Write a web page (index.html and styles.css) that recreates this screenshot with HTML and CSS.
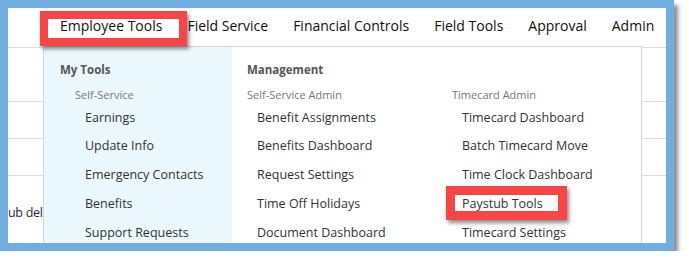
FILE: index.html
```html
<!DOCTYPE html>
<html lang="en">
<head>
    <meta charset="UTF-8">
    <meta name="viewport" content="width=device-width, initial-scale=1">
    <title>Employee Tools</title>
    <link rel="stylesheet" href="styles.css">
</head>
<body>

    <div class="frame">
        <div class="panel">

            <!-- Barra de navegação principal -->
            <nav class="topnav">
                <a href="#">Employee Tools</a>
                <a href="#">Field Service</a>
                <a href="#">Financial Controls</a>
                <a href="#">Field Tools</a>
                <a href="#">Approval</a>
                <a href="#">Admin</a>
            </nav>

            <!-- Conteúdo da página por trás do menu -->
            <div class="page">
                <div class="page-row toolbar"></div>
                <div class="page-row"></div>
                <div class="page-row"></div>
                <div class="page-row last">ub del</div>
            </div>

            <!-- Menu dropdown aberto -->
            <div class="mega">
                <div class="col mine">
                    <div class="head">My Tools</div>
                    <div class="sub indent">Self-Service</div>
                    <a href="#">Earnings</a>
                    <a href="#">Update Info</a>
                    <a href="#">Emergency Contacts</a>
                    <a href="#">Benefits</a>
                    <a href="#">Support Requests</a>
                </div>
                <div class="col">
                    <div class="head">Management</div>
                    <div class="sub">Self-Service Admin</div>
                    <a href="#">Benefit Assignments</a>
                    <a href="#">Benefits Dashboard</a>
                    <a href="#">Request Settings</a>
                    <a href="#">Time Off Holidays</a>
                    <a href="#">Document Dashboard</a>
                </div>
                <div class="col">
                    <div class="head blank">&nbsp;</div>
                    <div class="sub">Timecard Admin</div>
                    <a href="#">Timecard Dashboard</a>
                    <a href="#">Batch Timecard Move</a>
                    <a href="#">Time Clock Dashboard</a>
                    <a href="#">Paystub Tools</a>
                    <a href="#">Timecard Settings</a>
                </div>
            </div>

            <!-- Marcações vermelhas -->
            <span class="mark mark-nav"></span>
            <span class="mark mark-paystub"></span>
        </div>
    </div>

</body>
</html>
```

FILE: styles.css
```css
body {
    margin: 0;
    padding: 0;
    background-color: #ffffff;
    font-family: 'Open Sans', 'Noto Sans', sans-serif;
}

.frame {
    width: 674px;
    height: 251px;
    box-sizing: border-box;
    padding: 8px 8px 8px 8px;
    background-color: #71aee0;
    box-shadow: 4px 5px 4px rgba(0, 0, 0, 0.45);
}

.panel {
    position: relative;
    width: 100%;
    height: 100%;
    background-color: #ffffff;
    overflow: hidden;
}

/* Barra de navegação */
.topnav {
    display: flex;
    gap: 25px;
    height: 40px;
    box-sizing: border-box;
    padding: 8px 0 0 52px;
    border-bottom: 1px solid #dddddd;
}

.topnav a {
    color: #111111;
    text-decoration: none;
    font-size: 14px;
    line-height: 20px;
    white-space: nowrap;
}

/* Página por trás */
.page-row {
    height: 36px;
    border-bottom: 1px solid #dddddd;
}

.page-row.toolbar {
    height: 53px;
}

.page-row.last {
    border-bottom: none;
    padding-top: 28px;
    font-size: 12.5px;
    letter-spacing: -0.3px;
    color: #1c2a44;
    white-space: nowrap;
}

/* Menu dropdown */
.mega {
    position: absolute;
    top: 38px;
    left: 35px;
    width: 599px;
    height: 230px;
    box-sizing: border-box;
    display: grid;
    grid-template-columns: 188px 205px 1fr;
    background-color: #ffffff;
    border: 1px solid #d6d6d6;
}

.col {
    display: flex;
    flex-direction: column;
    padding: 15px 0 0 15px;
}

.col.mine {
    background-color: #eaf8fd;
    padding-left: 16px;
}

.head {
    font-size: 11.5px;
    font-weight: bold;
    line-height: 16px;
    color: #555555;
}

.sub {
    margin-top: 9px;
    font-size: 11px;
    line-height: 16px;
    color: #777777;
}

.sub.indent {
    padding-left: 15px;
}

.col a {
    display: block;
    padding-left: 10px;
    font-size: 12.5px;
    line-height: 28.75px;
    color: #333333;
    text-decoration: none;
    white-space: nowrap;
}

.col a:first-of-type {
    margin-top: 0.5px;
}

.col.mine a {
    padding-left: 25px;
}

/* Marcações vermelhas */
.mark {
    position: absolute;
    box-sizing: border-box;
    border: 8px solid #f94545;
    box-shadow: 2px 3px 4px rgba(0, 0, 0, 0.45);
}

.mark-nav {
    left: 32px;
    top: 3px;
    width: 147px;
    height: 35px;
}

.mark-paystub {
    left: 438px;
    top: 178px;
    width: 121px;
    height: 34px;
    border-width: 9px;
}
```
